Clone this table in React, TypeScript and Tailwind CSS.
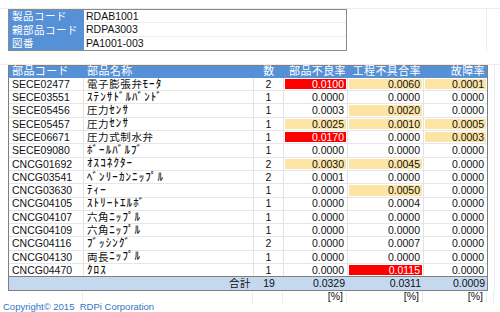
import React from "react";

type Fill = "" | "r" | "o";
type Cell = [string, Fill];
type Row = [string, string, string, Cell, Cell, Cell];

const rows: Row[] = [
  ["SECE02477", "電子膨張弁ﾓｰﾀ", "2", ["0.0100", "r"], ["0.0060", "o"], ["0.0001", "o"]],
  ["SECE03551", "ｽﾃﾝｻﾄﾞﾙﾊﾞﾝﾄﾞ", "1", ["0.0000", ""], ["0.0000", ""], ["0.0000", ""]],
  ["SECE05456", "圧力ｾﾝｻ", "1", ["0.0003", ""], ["0.0020", "o"], ["0.0000", ""]],
  ["SECE05457", "圧力ｾﾝｻ", "1", ["0.0025", "o"], ["0.0010", "o"], ["0.0005", "o"]],
  ["SECE06671", "圧力式制水弁", "1", ["0.0170", "r"], ["0.0000", ""], ["0.0003", "o"]],
  ["SECE09080", "ﾎﾞｰﾙﾊﾞﾙﾌﾞ", "1", ["0.0000", ""], ["0.0000", ""], ["0.0000", ""]],
  ["CNCG01692", "ｵｽｺﾈｸﾀｰ", "2", ["0.0030", "o"], ["0.0045", "o"], ["0.0000", ""]],
  ["CNCG03541", "ﾍﾞﾝﾘｰｶﾝﾆｯﾌﾟﾙ", "2", ["0.0001", ""], ["0.0000", ""], ["0.0000", ""]],
  ["CNCG03630", "ﾃｨｰ", "1", ["0.0000", ""], ["0.0050", "o"], ["0.0000", ""]],
  ["CNCG04105", "ｽﾄﾘｰﾄｴﾙﾎﾞ", "1", ["0.0000", ""], ["0.0004", ""], ["0.0000", ""]],
  ["CNCG04107", "六角ﾆｯﾌﾟﾙ", "1", ["0.0000", ""], ["0.0000", ""], ["0.0000", ""]],
  ["CNCG04109", "六角ﾆｯﾌﾟﾙ", "1", ["0.0000", ""], ["0.0000", ""], ["0.0000", ""]],
  ["CNCG04116", "ﾌﾞｯｼﾝｸﾞ", "2", ["0.0000", ""], ["0.0007", ""], ["0.0000", ""]],
  ["CNCG04130", "両長ﾆｯﾌﾟﾙ", "1", ["0.0000", ""], ["0.0000", ""], ["0.0000", ""]],
  ["CNCG04470", "ｸﾛｽ", "1", ["0.0000", ""], ["0.0115", "r"], ["0.0000", ""]],
];

function isHalf(ch: string) {
  const c = ch.charCodeAt(0);
  return c >= 0xff61 && c <= 0xff9f;
}

function Name({ text }: { text: string }) {
  const parts: { s: string; h: boolean }[] = [];
  for (const ch of text) {
    const h = isHalf(ch);
    const last = parts[parts.length - 1];
    if (last && last.h === h) last.s += ch;
    else parts.push({ s: ch, h });
  }
  return (
    <>
      {parts.map((p, i) =>
        p.h ? (
          <span key={i} className="text-[11px] font-medium tracking-[1.1px]">
            {p.s}
          </span>
        ) : (
          <span key={i} className="text-[10.5px] tracking-[0.6px]">
            {p.s}
          </span>
        )
      )}
    </>
  );
}

function Num({ c, w }: { c: Cell; w: string }) {
  const [v, f] = c;
  const cls =
    f === "r"
      ? "bg-[#ff0000] text-white"
      : f === "o"
      ? "bg-[#fce4a4] text-[#111]"
      : "text-[#111]";
  return (
    <div className={`${w} h-full border-r border-[#e3e3e3] p-[1px] flex`}>
      <div className={`flex-1 flex items-center justify-end pr-[2px] ${cls}`}>{v}</div>
    </div>
  );
}

export default function App() {
  return (
    <div
      className="w-[500px] h-[312px] bg-white overflow-hidden text-[10.5px] leading-none text-[#111]"
      style={{ fontFamily: '"Liberation Sans", Arial, "Noto Sans CJK JP", sans-serif' }}
    >
      {/* top spacer */}
      <div className="h-[9px] border-b border-[#ececec]" />

      {/* info block */}
      <div className="flex">
        <div className="w-[8px] shrink-0" />
        <div className="w-[339px] border border-[#8a8a8a] flex flex-col">
          {[
            ["製品コード", "RDAB1001"],
            ["親部品コード", "RDPA3003"],
            ["図番", "PA1001-003"],
          ].map(([l, v], i) => (
            <div key={i} className="flex h-[13.3px]">
              <div className="w-[75px] bg-[#5690d6] text-white flex items-center pl-[3px] text-[10.5px] tracking-[0.5px]">
                {l}
              </div>
              <div className={`flex-1 flex items-center pl-[2px] ${i < 2 ? "border-b border-[#ececec]" : ""}`}>
                {v}
              </div>
            </div>
          ))}
        </div>
        <div className="w-[140px] border-r border-[#ececec]" />
      </div>

      {/* blank row */}
      <div className="h-[14px] border-b border-[#ececec]" />

      {/* main table */}
      <div className="flex">
        <div className="w-[8px] shrink-0" />
        <div className="w-[480px] border border-[#7f7f7f] flex flex-col">
          {/* header */}
          <div className="flex h-[12px] bg-[#5690d6] text-white text-[11px] tracking-[0.4px]">
            <div className="w-[75px] flex items-center pl-[3px]">部品コード</div>
            <div className="w-[170px] flex items-center pl-[3px]">部品名称</div>
            <div className="w-[30px] flex items-center justify-center">数</div>
            <div className="w-[64px] flex items-center justify-end pr-[2px]">部品不良率</div>
            <div className="w-[76px] flex items-center justify-end pr-[3px]">工程不具合率</div>
            <div className="flex-1 flex items-center justify-end pr-[2px]">故障率</div>
          </div>
          {rows.map((r, i) => (
            <div key={i} className="flex h-[13.3px] border-b border-[#e6e6e6]">
              <div className="w-[75px] border-r border-[#e3e3e3] flex items-center pl-[3px]">{r[0]}</div>
              <div className="w-[170px] border-r border-[#e3e3e3] flex items-center pl-[3px]">
                <Name text={r[1]} />
              </div>
              <div className="w-[30px] border-r border-[#e3e3e3] flex items-center justify-center">{r[2]}</div>
              <Num c={r[3]} w="w-[64px]" />
              <Num c={r[4]} w="w-[76px]" />
              <Num c={r[5]} w="flex-1 !border-r-0" />
            </div>
          ))}
          {/* total */}
          <div className="flex h-[13.4px] bg-[#c4d9f0] border-t border-[#7f7f7f] -mt-[1px]">
            <div className="w-[245px] flex items-center justify-end pr-[3px] tracking-[0.5px]">合計</div>
            <div className="w-[30px] flex items-center justify-center">19</div>
            <div className="w-[64px] flex items-center justify-end pr-[3px]">0.0329</div>
            <div className="w-[76px] flex items-center justify-end pr-[3px]">0.0311</div>
            <div className="flex-1 flex items-center justify-end pr-[2px]">0.0009</div>
          </div>
        </div>
        <div className="w-[7px] border-r border-[#ececec]" />
      </div>

      {/* [%] row */}
      <div className="flex h-[12px]">
        <div className="w-[8px] shrink-0" />
        <div className="w-[75px] border-r border-[#ececec]" />
        <div className="w-[170px] border-r border-[#ececec]" />
        <div className="w-[30px] border-r border-[#ececec]" />
        <div className="w-[64px] border-r border-[#ececec] flex items-center justify-end pr-[3px]">[%]</div>
        <div className="w-[76px] border-r border-[#ececec] flex items-center justify-end pr-[3px]">[%]</div>
        <div className="w-[64px] border-r border-[#ececec] flex items-center justify-end pr-[3px]">[%]</div>
        <div className="w-[7px] border-r border-[#ececec]" />
      </div>

      <div className="-mt-[2px] pl-[3px] text-[9.5px] leading-[11px] text-[#3574c0]">Copyright© 2015&nbsp; RDPi Corporation</div>
    </div>
  );
}
